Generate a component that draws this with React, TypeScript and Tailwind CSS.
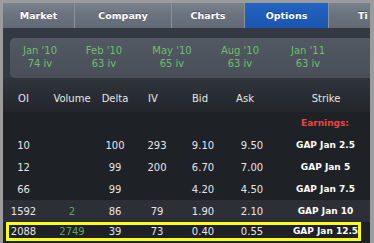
import React from 'react';

const tabs = [
  { label: 'Market', w: 'w-[72px]', active: false },
  { label: 'Company', w: 'w-[97px]', active: false },
  { label: 'Charts', w: 'w-[73px]', active: false },
  { label: 'Options', w: 'w-[84px]', active: true },
];

const months = [
  { m: "Jan '10", iv: '74 iv' },
  { m: "Feb '10", iv: '63 iv' },
  { m: "May '10", iv: '65 iv' },
  { m: "Aug '10", iv: '63 iv' },
  { m: "Jan '11", iv: '63 iv' },
];

const rows = [
  { oi: '10', vol: '', delta: '100', iv: '293', bid: '9.10', ask: '9.50', strike: 'GAP Jan 2.5', lit: false, sel: false },
  { oi: '12', vol: '', delta: '99', iv: '200', bid: '6.70', ask: '7.00', strike: 'GAP Jan 5', lit: false, sel: false },
  { oi: '66', vol: '', delta: '99', iv: '', bid: '4.20', ask: '4.50', strike: 'GAP Jan 7.5', lit: false, sel: false },
  { oi: '1592', vol: '2', delta: '86', iv: '79', bid: '1.90', ask: '2.10', strike: 'GAP Jan 10', lit: true, sel: false },
  { oi: '2088', vol: '2749', delta: '39', iv: '73', bid: '0.40', ask: '0.55', strike: 'GAP Jan 12.5', lit: false, sel: true },
];

// column widths shared by header and rows
const cols = 'grid grid-cols-[41px_56px_30px_46px_48px_42px_1fr]';

export default function App() {
  return (
    <div className="w-[374px] h-[243px] overflow-hidden bg-[#9c9c9c] pt-[3px] pl-[3px] pr-[4px] font-['DejaVu_Sans',sans-serif] text-[10px] leading-[13px] text-[#e6e6e6]">
      <div className="h-[240px] overflow-hidden bg-[#1e2126]">
        {/* Tabs */}
        <div className="flex h-[25px] bg-[linear-gradient(#7a828e,#6b737f_45%,#626a76)] text-[9.5px] font-bold text-white [text-shadow:0_-1px_0_rgba(0,0,0,0.35)]">
          {tabs.map((t) => (
            <div
              key={t.label}
              className={`${t.w} shrink-0 flex items-center justify-center border-r border-[#8b929c] ${
                t.active ? 'bg-[linear-gradient(#2263c2,#1b56b0)]' : ''
              }`}
            >
              {t.label}
            </div>
          ))}
          <div className="flex-1 flex items-center pl-[29px]">Ti</div>
        </div>

        {/* Expiry months */}
        <div className="bg-[#333943] pt-[10px] pl-[7px]">
          <div className="h-[40px] rounded-l-[5px] bg-[linear-gradient(#525963,#484f59)] pt-[6px] grid grid-cols-[60px_repeat(4,68px)] text-center text-[#6cbf6c]">
            {months.map((x) => (
              <div key={x.m}>
                <div>{x.m}</div>
                <div>{x.iv}</div>
              </div>
            ))}
          </div>
        </div>

        {/* Header */}
        <div className={`${cols} h-[34px] items-end pb-[7px] text-center bg-[linear-gradient(#30353c,#22262b)]`}>
          <div>OI</div>
          <div>Volume</div>
          <div>Delta</div>
          <div>IV</div>
          <div>Bid</div>
          <div>Ask</div>
          <div className="pl-[16px]">Strike</div>
        </div>

        {/* Earnings */}
        <div className={`${cols} h-[22px] items-center text-center`}>
          <div className="col-start-7 pl-[14px] font-bold text-[9px] text-[#e84545]">Earnings:</div>
        </div>

        {rows.map((r) => (
          <div
            key={r.oi}
            className={`relative ${cols} h-[22px] items-center text-center ${r.lit ? 'bg-[#2c3036]' : ''} ${
              r.sel ? 'pb-[3px]' : ''
            }`}
          >
            <div>{r.oi}</div>
            <div className="text-[#5fa55f]">{r.vol}</div>
            <div>{r.delta}</div>
            <div className="pl-[8px]">{r.iv}</div>
            <div className="pl-[6px]">{r.bid}</div>
            <div className="pl-[14px]">{r.ask}</div>
            <div className="pl-[15px] font-bold text-[9px] text-white">{r.strike}</div>
            {r.sel && (
              <div className="absolute left-[3px] top-0 w-[355px] h-[19px] border-[3px] border-[#ffff14]" />
            )}
          </div>
        ))}
      </div>
    </div>
  );
}
